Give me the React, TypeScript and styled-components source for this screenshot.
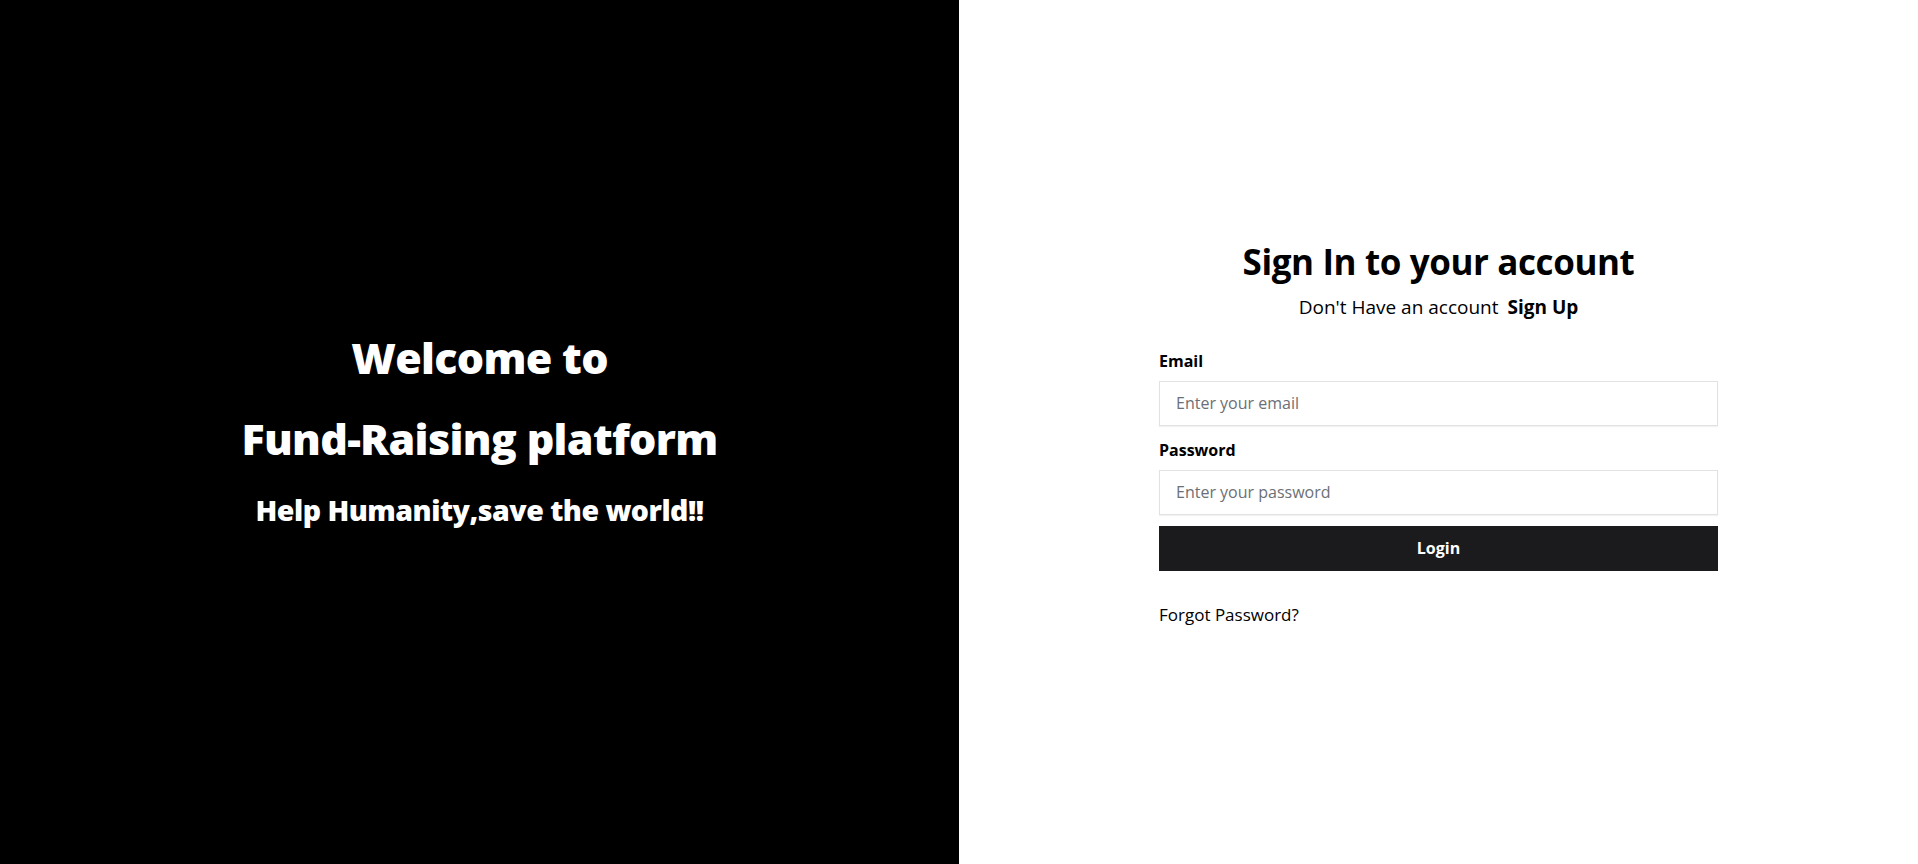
import React from "react";
import styled, { createGlobalStyle } from "styled-components";

const GlobalStyle = createGlobalStyle`
  * {
    box-sizing: border-box;
  }
  body {
    margin: 0;
    font-family: "Open Sans", "Noto Sans", sans-serif;
    color: #000;
  }
`;

function App() {
  return (
    <>
      <GlobalStyle />
      <Page>
        <Hero>
          <HeroTitle>Welcome to</HeroTitle>
          <HeroTitle>Fund-Raising platform</HeroTitle>
          <HeroSub>Help Humanity,save the world!!</HeroSub>
        </Hero>
        <Side>
          <Form onSubmit={(e) => e.preventDefault()}>
            <Title>Sign In to your account</Title>
            <Switch>
              Don't Have an account <SwitchLink href="#">Sign Up</SwitchLink>
            </Switch>
            <Label htmlFor="email">Email</Label>
            <Input id="email" type="email" placeholder="Enter your email" />
            <Label htmlFor="password">Password</Label>
            <Input id="password" type="password" placeholder="Enter your password" />
            <Button type="submit">Login</Button>
            <Forgot href="#">Forgot Password?</Forgot>
          </Form>
        </Side>
      </Page>
    </>
  );
}

const Page = styled.div`
  display: grid;
  grid-template-columns: 1fr 1fr;
  height: 100vh;
`;

const Hero = styled.div`
  background-color: #000;
  color: #fff;
  display: flex;
  flex-direction: column;
  align-items: center;
  justify-content: center;
  padding-bottom: 6px;
`;

const HeroTitle = styled.h1`
  margin: 0;
  font-size: 43px;
  font-weight: 800;
  line-height: 81px;
  letter-spacing: -0.7px;
`;

const HeroSub = styled.h2`
  margin: 0;
  font-size: 28.5px;
  font-weight: 800;
  line-height: 62px;
  letter-spacing: -0.5px;
`;

const Side = styled.div`
  background-color: #fff;
  display: flex;
  align-items: center;
  justify-content: center;
`;

const Form = styled.form`
  width: 559px;
  display: flex;
  flex-direction: column;
`;

const Title = styled.h1`
  margin: 0;
  text-align: center;
  font-size: 35px;
  font-weight: 700;
  line-height: 48px;
  letter-spacing: -0.4px;
`;

const Switch = styled.p`
  margin: 8px 0 30px;
  text-align: center;
  font-size: 19px;
  line-height: 26px;
`;

const SwitchLink = styled.a`
  margin-left: 4px;
  color: #000;
  font-weight: 700;
  text-decoration: none;
`;

const Label = styled.label`
  font-size: 16px;
  font-weight: 700;
  line-height: 22px;
  margin-bottom: 9px;
`;

const Input = styled.input`
  height: 45px;
  width: 100%;
  padding: 0 16px;
  margin-bottom: 13px;
  border: 1px solid #e2e2e2;
  border-radius: 0;
  box-shadow: 0 1px 1px rgba(0, 0, 0, 0.05);
  font-family: inherit;
  font-size: 16px;
  outline: none;
  &::placeholder {
    color: #6c6f75;
  }
`;

const Button = styled.button`
  height: 45px;
  margin-top: -2px;
  border: none;
  background-color: #1b1b1d;
  color: #fff;
  font-family: inherit;
  font-size: 16px;
  font-weight: 700;
  cursor: pointer;
`;

const Forgot = styled.a`
  margin-top: 32px;
  color: #000;
  font-size: 17px;
  line-height: 24px;
  text-decoration: none;
`;

export default App;
